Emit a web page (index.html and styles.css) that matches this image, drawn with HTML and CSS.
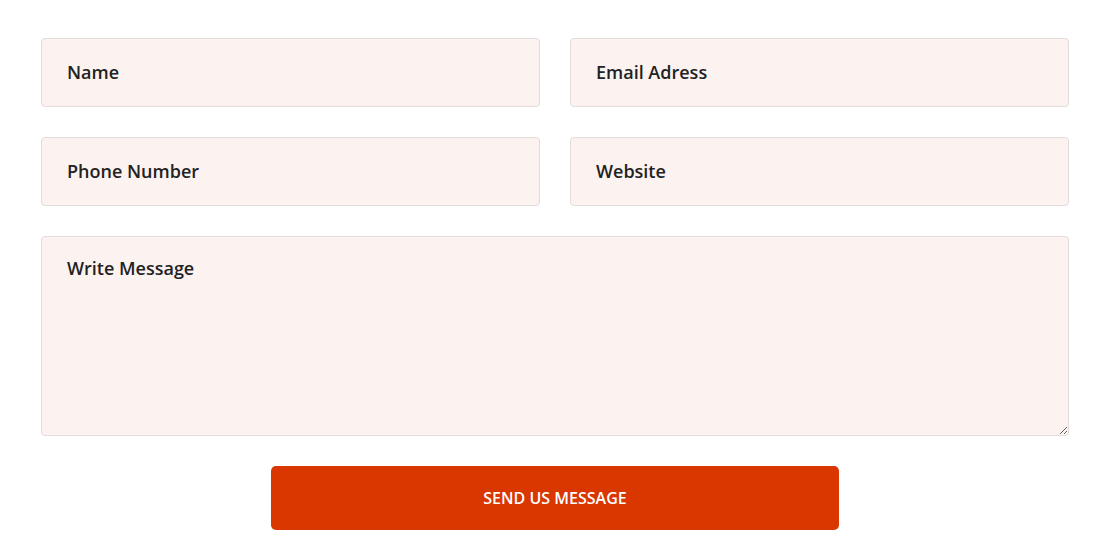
FILE: index.html
```html
<!DOCTYPE html>
<html lang="en">
<head>
  <meta charset="UTF-8">
  <title>Contact Form</title>
  <meta name="viewport" content="width=device-width,initial-scale=1">
  <link rel="stylesheet" href="styles.css">
</head>
<body>
  <form class="contact-form">
    <div class="fields">
      <input type="text" class="field" placeholder="Name">
      <input type="email" class="field" placeholder="Email Adress">
      <input type="text" class="field" placeholder="Phone Number">
      <input type="text" class="field" placeholder="Website">
      <textarea class="field message" placeholder="Write Message"></textarea>
    </div>
    <div class="actions">
      <button type="button" class="btn">Send us message</button>
    </div>
  </form>
</body>
</html>
```

FILE: styles.css
```css
html, body {
  margin: 0;
  background: #fff;
}
body {
  font-family: 'Open Sans', sans-serif;
  padding: 38px 35px 0 41px;
}
.contact-form {
  width: 1028px;
}
.fields {
  display: grid;
  grid-template-columns: 1fr 1fr;
  column-gap: 30px;
  row-gap: 30px;
}
.field {
  height: 69px;
  box-sizing: border-box;
  border: 1px solid #e3dcdb;
  border-radius: 4px;
  background: #fcf2f0;
  padding: 0 25px 2px;
  font-family: 'Open Sans', sans-serif;
  font-size: 18px;
  font-weight: 600;
  color: #222;
  outline: none;
}
.field::placeholder {
  color: #222;
  opacity: 1;
}
.message {
  grid-column: 1 / span 2;
  height: 200px;
  padding: 18px 25px;
  line-height: 1.5;
  resize: vertical;
}
.actions {
  display: flex;
  justify-content: center;
  margin-top: 30px;
}
.btn {
  width: 568px;
  height: 64px;
  border: none;
  border-radius: 5px;
  background: #d93600;
  color: #fff;
  font-family: 'Open Sans', sans-serif;
  font-size: 16px;
  font-weight: 600;
  text-transform: uppercase;
  cursor: pointer;
}
```
